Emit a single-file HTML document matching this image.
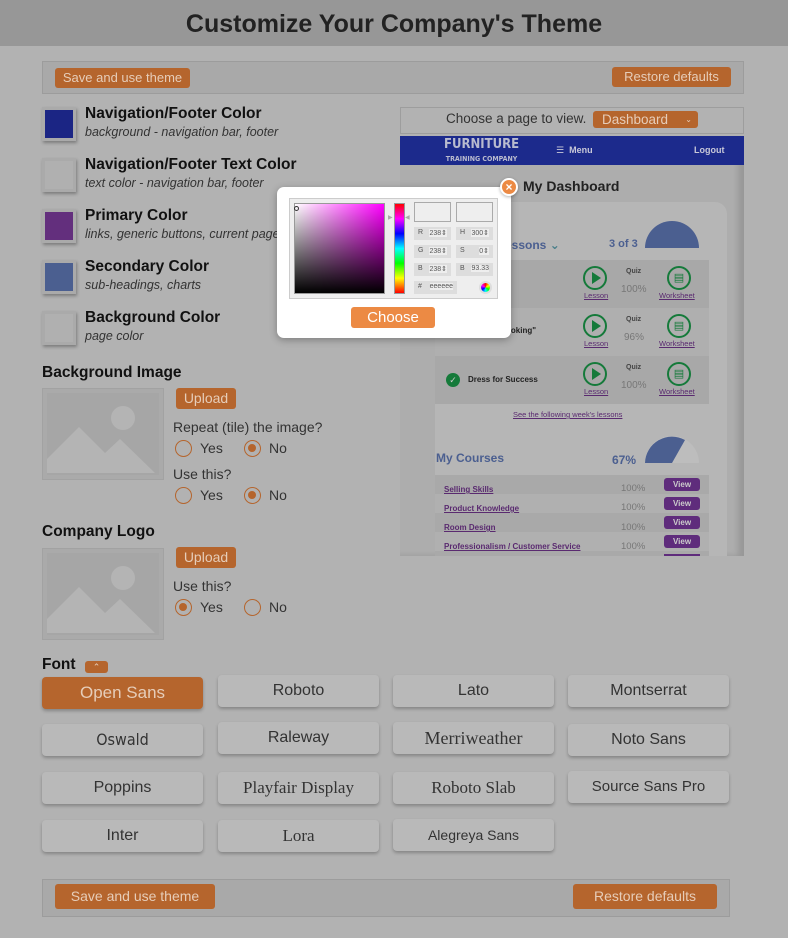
<!DOCTYPE html>
<html><head><meta charset="utf-8"><style>
*{box-sizing:border-box;margin:0;padding:0}
body{width:788px;height:938px;background:#b2b2b2;font-family:"Liberation Sans","DejaVu Sans",sans-serif;position:relative;overflow:hidden;color:#111}
.a{position:absolute}
.hdr{left:0;top:0;width:788px;height:46px;background:#979797;text-align:center;font-weight:bold;font-size:25px;line-height:48px;color:#222}
.bar{background:#a9a9a9;border:1px solid #9c9c9c}
.ob{background:#b5652d;color:#e6cdb9;border-radius:3px;text-align:center;font-size:13px}
.sw{width:34px;height:34px;border:3px solid #aaa;box-shadow:1px 2px 3px rgba(0,0,0,.3)}
.t{font-weight:bold;font-size:15.5px;color:#111}
.s{font-style:italic;font-size:12.5px;color:#333}
.h{font-weight:bold;font-size:15.5px}
.ph{width:122px;height:92px;border:1px solid #a2a2a2;background:#aaa;overflow:hidden}
.rd{width:17px;height:17px;border:1.5px solid #b5652d;border-radius:50%}
.rd.on::after{content:"";position:absolute;left:3px;top:3px;width:8px;height:8px;border-radius:50%;background:#b5652d}
.lbl{font-size:14px;color:#333}
.fb{width:161px;height:32px;background:#b9b9b9;border-radius:4px;box-shadow:0 2px 3px rgba(0,0,0,.25);text-align:center;line-height:32px;font-size:16px;color:#333}
</style></head><body>
<div class="a hdr">Customize Your Company's Theme</div>

<div class="a bar" style="left:42px;top:61px;width:702px;height:33px"></div>
<div class="a ob" style="left:55px;top:68px;width:135px;height:20px;line-height:20px">Save and use theme</div>
<div class="a ob" style="left:612px;top:67px;width:119px;height:20px;line-height:20px">Restore defaults</div>

<div class="a sw" style="left:42px;top:107px;background:#1b2584"></div>
<div class="a t" style="left:85px;top:105px">Navigation/Footer Color</div>
<div class="a s" style="left:85px;top:125px">background - navigation bar, footer</div>
<div class="a sw" style="left:42px;top:158px;background:#b0b0b0"></div>
<div class="a t" style="left:85px;top:156px">Navigation/Footer Text Color</div>
<div class="a s" style="left:85px;top:176px">text color - navigation bar, footer</div>
<div class="a sw" style="left:42px;top:209px;background:#632f7d"></div>
<div class="a t" style="left:85px;top:207px">Primary Color</div>
<div class="a s" style="left:85px;top:227px">links, generic buttons, current page</div>
<div class="a sw" style="left:42px;top:260px;background:#4b5f90"></div>
<div class="a t" style="left:85px;top:258px">Secondary Color</div>
<div class="a s" style="left:85px;top:278px">sub-headings, charts</div>
<div class="a sw" style="left:42px;top:311px;background:#b0b0b0"></div>
<div class="a t" style="left:85px;top:309px">Background Color</div>
<div class="a s" style="left:85px;top:329px">page color</div>

<div class="a h" style="left:42px;top:364px">Background Image</div>
<div class="a ph" style="left:42px;top:388px"><svg width="122" height="92"><rect x="4" y="4" width="112" height="82" fill="#a6a6a6"/><circle cx="80" cy="29" r="12" fill="#b4b4b4"/><path d="M4 70 L36 38 L62 64 L77 50 L112 84 L4 84Z" fill="#b4b4b4"/></svg></div>
<div class="a ob" style="left:176px;top:388px;width:60px;height:21px;line-height:21px;font-size:14px">Upload</div>
<div class="a lbl" style="left:173px;top:419px">Repeat (tile) the image?</div>
<div class="a rd" style="left:175px;top:440px"></div><div class="a lbl" style="left:200px;top:440px">Yes</div>
<div class="a rd on" style="left:244px;top:440px"></div><div class="a lbl" style="left:269px;top:440px">No</div>
<div class="a lbl" style="left:173px;top:466px">Use this?</div>
<div class="a rd" style="left:175px;top:487px"></div><div class="a lbl" style="left:200px;top:487px">Yes</div>
<div class="a rd on" style="left:244px;top:487px"></div><div class="a lbl" style="left:269px;top:487px">No</div>

<div class="a h" style="left:42px;top:523px">Company Logo</div>
<div class="a ph" style="left:42px;top:548px"><svg width="122" height="92"><rect x="4" y="4" width="112" height="82" fill="#a6a6a6"/><circle cx="80" cy="29" r="12" fill="#b4b4b4"/><path d="M4 70 L36 38 L62 64 L77 50 L112 84 L4 84Z" fill="#b4b4b4"/></svg></div>
<div class="a ob" style="left:176px;top:547px;width:60px;height:21px;line-height:21px;font-size:14px">Upload</div>
<div class="a lbl" style="left:173px;top:578px">Use this?</div>
<div class="a rd on" style="left:175px;top:599px"></div><div class="a lbl" style="left:200px;top:599px">Yes</div>
<div class="a rd" style="left:244px;top:599px"></div><div class="a lbl" style="left:269px;top:599px">No</div>

<div class="a h" style="left:42px;top:656px">Font</div>
<div class="a ob" style="left:85px;top:661px;width:23px;height:12px;line-height:12px;font-size:9px">&#8963;</div>

<div class="a fb" style="left:42px;top:677px;background:#b5652d;color:#e6cdb9;font-size:17px">Open Sans</div>
<div class="a fb" style="left:218px;top:675px">Roboto</div>
<div class="a fb" style="left:393px;top:675px">Lato</div>
<div class="a fb" style="left:568px;top:675px">Montserrat</div>
<div class="a fb" style="left:42px;top:724px;font-family:'DejaVu Sans Condensed',sans-serif">Oswald</div>
<div class="a fb" style="left:218px;top:722px">Raleway</div>
<div class="a fb" style="left:393px;top:722px;font-family:'Liberation Serif',serif;font-size:18px">Merriweather</div>
<div class="a fb" style="left:568px;top:724px">Noto Sans</div>
<div class="a fb" style="left:42px;top:772px">Poppins</div>
<div class="a fb" style="left:218px;top:772px;font-family:'Liberation Serif',serif;font-size:17px">Playfair Display</div>
<div class="a fb" style="left:393px;top:772px;font-family:'Liberation Serif',serif;font-size:17px">Roboto Slab</div>
<div class="a fb" style="left:568px;top:771px;font-size:15px">Source Sans Pro</div>
<div class="a fb" style="left:42px;top:820px">Inter</div>
<div class="a fb" style="left:218px;top:820px;font-family:'Liberation Serif',serif;font-size:17px">Lora</div>
<div class="a fb" style="left:393px;top:819px;font-size:14px">Alegreya Sans</div>

<div class="a bar" style="left:42px;top:879px;width:688px;height:38px"></div>
<div class="a ob" style="left:55px;top:884px;width:160px;height:25px;line-height:25px;font-size:14px">Save and use theme</div>
<div class="a ob" style="left:573px;top:884px;width:144px;height:25px;line-height:25px;font-size:14px">Restore defaults</div>

<!-- preview -->
<div class="a" style="left:400px;top:107px;width:344px;height:27px;border:1px solid #9d9d9d;background:#b2b2b2"></div>
<div class="a" style="left:446px;top:111px;font-size:13.5px;color:#333">Choose a page to view.</div>
<div class="a ob" style="left:593px;top:111px;width:105px;height:17px;line-height:17px;font-size:13.5px;text-align:left;padding-left:9px">Dashboard<span style="position:absolute;right:6px;font-size:8px">&#8964;</span></div>
<div class="a" style="left:400px;top:136px;width:344px;height:420px;background:#adadad;box-shadow:inset -6px 0 6px rgba(0,0,0,.12)"></div>
<div class="a" style="left:400px;top:136px;width:344px;height:29px;background:#1c2a8c"></div>
<div class="a" style="left:444px;top:138px;color:#b9bbcf;font-weight:bold;font-size:13px;line-height:13px;font-family:'DejaVu Sans Condensed',sans-serif;text-align:center">FURNITURE<br><span style="font-size:7px;line-height:8px">TRAINING COMPANY</span></div>
<div class="a" style="left:556px;top:145px;color:#c8c8d8;font-size:9px;font-weight:bold">&#9776;&nbsp; Menu</div>
<div class="a" style="left:694px;top:145px;color:#c8c8d8;font-size:9px;font-weight:bold">Logout</div>
<div class="a" style="left:523px;top:178px;font-weight:bold;font-size:14px;color:#222">My Dashboard</div>
<div class="a" style="left:435px;top:202px;width:292px;height:354px;background:#b6b6b6;border-radius:12px 12px 0 0"></div>
<div class="a" style="left:505px;top:238px;color:#4b5f90;font-weight:bold;font-size:12px">essons <span style="color:#4a7f8a">&#8964;</span></div>
<div class="a" style="left:609px;top:238px;color:#4b5f90;font-weight:bold;font-size:11px">3 of 3</div>
<div class="a" style="left:645px;top:221px;width:54px;height:27px;background:#4b5f90;border-radius:27px 27px 0 0"></div>

<div class="a" style="left:435px;top:260px;width:274px;height:144px;background:#a8a8a8"></div>
<div class="a" style="left:435px;top:308px;width:274px;height:48px;background:#afafaf"></div>
<div class="a" style="left:506px;top:326px;font-size:8px;font-weight:bold;color:#222">ooking"</div>
<div class="a" style="left:446px;top:373px;width:14px;height:14px;border-radius:50%;background:#157a3a;color:#ccc;font-size:9px;text-align:center;line-height:14px">&#10003;</div>
<div class="a" style="left:468px;top:375px;font-size:8px;font-weight:bold;color:#222">Dress for Success</div>

<div class="a" style="left:583px;top:266px;width:24px;height:24px;border:2px solid #157a3a;border-radius:50%"></div>
<div class="a" style="left:592px;top:272px;border-left:9px solid #157a3a;border-top:6px solid transparent;border-bottom:6px solid transparent"></div>
<div class="a" style="left:584px;top:291px;font-size:7.5px;color:#5a2a70;text-decoration:underline">Lesson</div>
<div class="a" style="left:626px;top:268px;font-size:7px;font-weight:bold;color:#444">Quiz</div>
<div class="a" style="left:621px;top:284px;font-size:10px;color:#777">100%</div>
<div class="a" style="left:667px;top:266px;width:24px;height:24px;border:2px solid #157a3a;border-radius:50%;color:#157a3a;font-size:11px;text-align:center;line-height:20px">&#9636;</div>
<div class="a" style="left:659px;top:291px;font-size:7.5px;color:#5a2a70;text-decoration:underline">Worksheet</div>

<div class="a" style="left:583px;top:314px;width:24px;height:24px;border:2px solid #157a3a;border-radius:50%"></div>
<div class="a" style="left:592px;top:320px;border-left:9px solid #157a3a;border-top:6px solid transparent;border-bottom:6px solid transparent"></div>
<div class="a" style="left:584px;top:339px;font-size:7.5px;color:#5a2a70;text-decoration:underline">Lesson</div>
<div class="a" style="left:626px;top:316px;font-size:7px;font-weight:bold;color:#444">Quiz</div>
<div class="a" style="left:624px;top:332px;font-size:10px;color:#777">96%</div>
<div class="a" style="left:667px;top:314px;width:24px;height:24px;border:2px solid #157a3a;border-radius:50%;color:#157a3a;font-size:11px;text-align:center;line-height:20px">&#9636;</div>
<div class="a" style="left:659px;top:339px;font-size:7.5px;color:#5a2a70;text-decoration:underline">Worksheet</div>

<div class="a" style="left:583px;top:362px;width:24px;height:24px;border:2px solid #157a3a;border-radius:50%"></div>
<div class="a" style="left:592px;top:368px;border-left:9px solid #157a3a;border-top:6px solid transparent;border-bottom:6px solid transparent"></div>
<div class="a" style="left:584px;top:387px;font-size:7.5px;color:#5a2a70;text-decoration:underline">Lesson</div>
<div class="a" style="left:626px;top:364px;font-size:7px;font-weight:bold;color:#444">Quiz</div>
<div class="a" style="left:621px;top:380px;font-size:10px;color:#777">100%</div>
<div class="a" style="left:667px;top:362px;width:24px;height:24px;border:2px solid #157a3a;border-radius:50%;color:#157a3a;font-size:11px;text-align:center;line-height:20px">&#9636;</div>
<div class="a" style="left:659px;top:387px;font-size:7.5px;color:#5a2a70;text-decoration:underline">Worksheet</div>

<div class="a" style="left:513px;top:410px;font-size:7.5px;color:#5a2a70;text-decoration:underline">See the following week's lessons</div>
<div class="a" style="left:436px;top:451px;color:#4b5f90;font-weight:bold;font-size:12px">My Courses</div>
<div class="a" style="left:612px;top:453px;color:#4b5f90;font-weight:bold;font-size:12px">67%</div>
<svg class="a" style="left:645px;top:436px" width="54" height="28"><path d="M0 27 A27 27 0 0 1 54 27Z" fill="#bdbdbd"/><path d="M0 27 A27 27 0 0 1 40 4 L27 27Z" fill="#4b5f90"/></svg>
<div class="a" style="left:435px;top:475px;width:274px;height:81px;background:#a9a9a9"></div>
<div class="a" style="left:435px;top:494px;width:274px;height:19px;background:#b0b0b0"></div>
<div class="a" style="left:435px;top:532px;width:274px;height:19px;background:#b0b0b0"></div>
<div class="a" style="left:444px;top:480px;font-size:8px;font-weight:bold;color:#5a2a70;text-decoration:underline;line-height:19px">Selling Skills<br>Product Knowledge<br>Room Design<br>Professionalism / Customer Service</div>
<div class="a" style="left:621px;top:479px;font-size:9.5px;color:#777;line-height:19.3px">100%<br>100%<br>100%<br>100%</div>
<div class="a" style="left:664px;top:478px;width:36px;height:13px;background:#5f2c7c;border-radius:3px;color:#ccc;font-size:8px;font-weight:bold;text-align:center;line-height:13px">View</div>
<div class="a" style="left:664px;top:497px;width:36px;height:13px;background:#5f2c7c;border-radius:3px;color:#ccc;font-size:8px;font-weight:bold;text-align:center;line-height:13px">View</div>
<div class="a" style="left:664px;top:516px;width:36px;height:13px;background:#5f2c7c;border-radius:3px;color:#ccc;font-size:8px;font-weight:bold;text-align:center;line-height:13px">View</div>
<div class="a" style="left:664px;top:535px;width:36px;height:13px;background:#5f2c7c;border-radius:3px;color:#ccc;font-size:8px;font-weight:bold;text-align:center;line-height:13px">View</div>
<div class="a" style="left:664px;top:554px;width:36px;height:2px;background:#5f2c7c"></div>

<!-- modal -->
<div class="a" style="left:277px;top:187px;width:234px;height:151px;background:#fff;border-radius:7px;box-shadow:0 2px 8px rgba(0,0,0,.3)"></div>
<div class="a" style="left:289px;top:198px;width:209px;height:101px;background:#eee;border:1px solid #ccc"></div>
<div class="a" style="left:294px;top:203px;width:91px;height:91px;background:linear-gradient(to top,#000,transparent),linear-gradient(to right,#fff,#f0f);border:1px solid #999"></div>
<div class="a" style="left:294px;top:206px;width:5px;height:5px;border:1px solid #333;border-radius:50%"></div>
<div class="a" style="left:394px;top:203px;width:11px;height:91px;background:linear-gradient(#f00,#f0f,#00f,#0ff,#0f0,#ff0,#f00);border:1px solid #999"></div>
<div class="a" style="left:388px;top:214px;font-size:6px;color:#aaa">&#9654;</div>
<div class="a" style="left:405px;top:214px;font-size:6px;color:#aaa">&#9664;</div>
<div class="a" style="left:414px;top:202px;width:37px;height:20px;background:#eee;border:1px solid #aaa"></div>
<div class="a" style="left:456px;top:202px;width:37px;height:20px;background:#eee;border:1px solid #aaa"></div>
<div class="a" style="left:414px;top:227px;width:37px;height:13px;background:#ddd;font-size:7px;color:#555;padding:2px 4px">R<span style="float:right;background:#eee">238&#8661;</span></div>
<div class="a" style="left:456px;top:227px;width:37px;height:13px;background:#ddd;font-size:7px;color:#555;padding:2px 4px">H<span style="float:right;background:#eee">300&#8661;</span></div>
<div class="a" style="left:414px;top:245px;width:37px;height:13px;background:#ddd;font-size:7px;color:#555;padding:2px 4px">G<span style="float:right;background:#eee">238&#8661;</span></div>
<div class="a" style="left:456px;top:245px;width:37px;height:13px;background:#ddd;font-size:7px;color:#555;padding:2px 4px">S<span style="float:right;background:#eee">0&#8661;</span></div>
<div class="a" style="left:414px;top:263px;width:37px;height:13px;background:#ddd;font-size:7px;color:#555;padding:2px 4px">B<span style="float:right;background:#eee">238&#8661;</span></div>
<div class="a" style="left:456px;top:263px;width:37px;height:13px;background:#ddd;font-size:7px;color:#555;padding:2px 4px">B<span style="float:right;background:#eee">93.33</span></div>
<div class="a" style="left:414px;top:281px;width:43px;height:13px;background:#ddd;font-size:7px;color:#555;padding:2px 4px">#<span style="float:right;background:#eee">eeeeee</span></div>
<div class="a" style="left:479px;top:281px;width:13px;height:13px;border-radius:50%;background:conic-gradient(#f00,#ff0,#0f0,#0ff,#00f,#f0f,#f00);border:2px solid #ddd"></div>
<div class="a" style="left:351px;top:307px;width:84px;height:21px;background:#ec8a44;border-radius:3px;color:#fff;font-size:15px;text-align:center;line-height:21px">Choose</div>
<div class="a" style="left:500px;top:178px;width:18px;height:18px;border-radius:50%;background:#ec8a44;border:2px solid #fff;box-shadow:0 1px 3px rgba(0,0,0,.3);color:#fff;font-size:12px;font-weight:bold;text-align:center;line-height:14px">&#215;</div>
</body></html>
